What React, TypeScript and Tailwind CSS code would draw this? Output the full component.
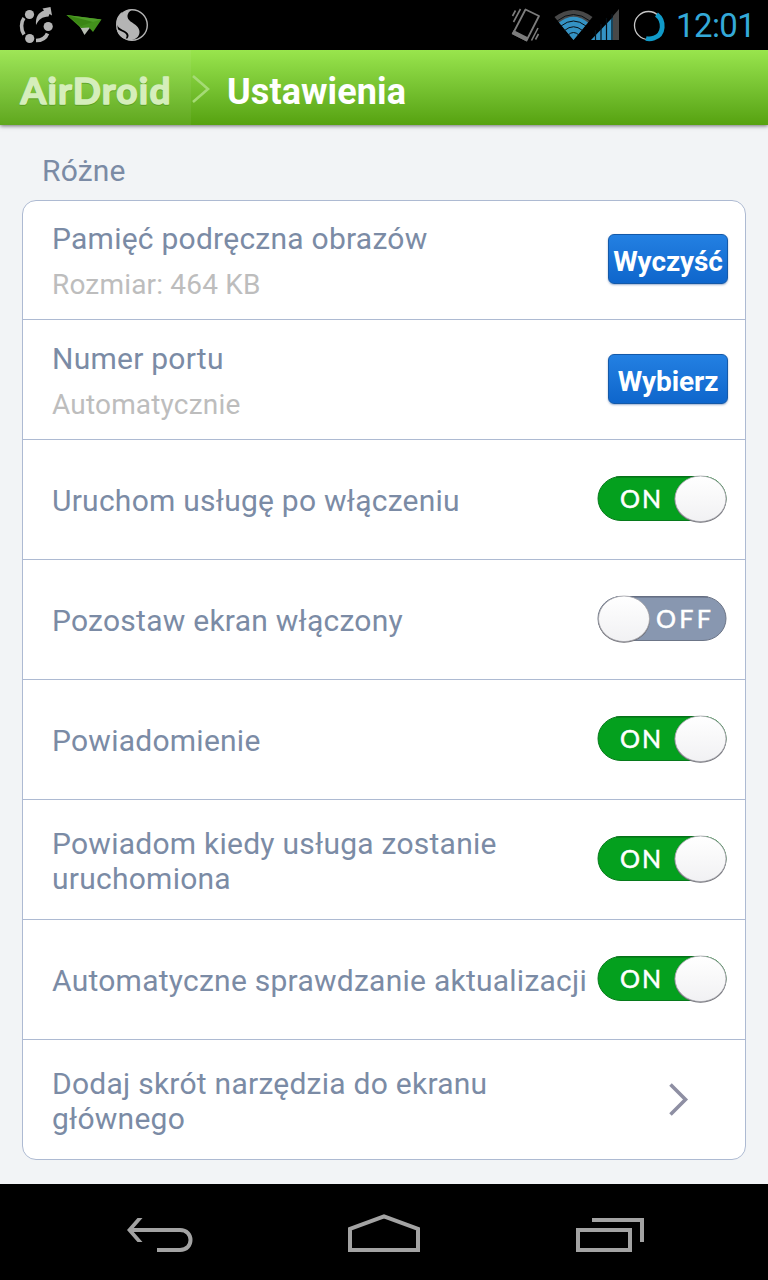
import { useState } from "react"
import type { ReactNode } from "react"

interface ToggleProps {
  on: boolean;
  label: string;
  onChange: () => void;
}

function Toggle({ on, label, onChange }: ToggleProps) {
  return (
    <button role="switch" aria-checked={on} aria-label={label} onClick={onChange} className="mb-[2px] h-[50px] w-[132px] shrink-0">
      <svg width="132" height="50" viewBox="0 0 132 50">
        <defs>
          <linearGradient id="knob" x1="0" y1="0" x2="0" y2="1">
            <stop offset="0" stopColor="#ffffff" />
            <stop offset="1" stopColor="#f1f1f3" />
          </linearGradient>
        </defs>
        <rect x="2" y="2.5" width="128" height="44" rx="23" ry="22" fill={on ? "#04a01e" : "#8897b0"} stroke={on ? "#067a1b" : "#6c7587"} />
        <path d="M20 3H112" stroke={on ? "#056a17" : "#5f697c"} />
        <text
          x={on ? 24 : 60}
          y={on ? 34 : 33.5}
          textLength={on ? 41 : 55}
          fontFamily="Lato, sans-serif"
          fontSize="25"
          fontWeight="400"
          fill="#fff"
          stroke="#fff"
          strokeWidth="0.5"
        >
          {on ? "ON" : "OFF"}
        </text>
        <ellipse cx={on ? 104.5 : 28} cy="25.5" rx="26" ry="23.2" fill="#6f6f76" />
        <ellipse cx={on ? 104.5 : 28} cy="24.8" rx="25.5" ry="22.8" fill="url(#knob)" stroke="#a6a6ac" strokeWidth="0.8" />
      </svg>
    </button>
  )
}

function BlueButton({ children }: { children: ReactNode }) {
  return (
    <button className="mb-[2px] h-[50px] w-[120px] shrink-0 rounded-md border border-[#1459a8] bg-linear-to-b from-[#2380e2] to-[#0e66cc] pt-[5px] text-[28px] leading-[43px] font-bold tracking-[-0.1px] whitespace-nowrap text-white shadow-[0_1px_2px_rgba(60,100,160,0.5)]">
      {children}
    </button>
  )
}

interface RowProps {
  title: string;
  subtitle?: string;
  children: ReactNode;
}

function Row({ title, subtitle, children }: RowProps) {
  return (
    <li className="flex min-h-0 items-center border-b border-[#adbad2] pr-[17px] pl-[29px] last:border-b-0">
      <div className="min-w-0 flex-1 pt-[2px]">
        <p className="text-[30px] leading-[35px] tracking-[0.25px] text-[#7b8ba5]">{title}</p>
        {subtitle && <p className="mt-[12px] text-[28px] leading-[33px] tracking-[0.18px] text-[#bdbdbd]">{subtitle}</p>}
      </div>
      {children}
    </li>
  )
}

function StatusBar() {
  return (
    <div className="flex h-[50px] items-center bg-black">
      <svg width="160" height="50" viewBox="0 0 160 50">
        {/* share */}
        <g fill="#b4b4b4">
          <circle cx="29.5" cy="14.5" r="4.6" />
          <circle cx="48.2" cy="26.5" r="4.6" />
          <circle cx="29.7" cy="38.5" r="4.6" />
          <path d="M36 25C35.500 17 38 13 44 10.500L42.500 8.500L50.500 7L52 15.500L49.500 14L48.500 16.500C42 17 39 19 36 25Z" />
        </g>
        <path d="M24 18C21 22 20.500 29 24 34.500M36 40.500C42 40.500 46 37.500 47.500 33.500" fill="none" stroke="#b4b4b4" strokeWidth="3.600" />
        {/* paper plane */}
        <path d="M79 25L92 25L84.500 35Z" fill="#b9bfb4" />
        <path d="M66.500 15L101.500 19.500L93 32L89 27.500L81 28Z" fill="#43911c" />
        <path d="M66.500 15L101.500 19.500L82 25Z" fill="#4f9e28" />
        <path d="M66.500 15L93 22L81 26Z" fill="#3b8514" />
        {/* swirl */}
        <circle cx="132" cy="25" r="15.300" fill="none" stroke="#b4b4b4" strokeWidth="1.400" />
        <path d="M132 9.500C128 10 124.500 11 122 14L121.500 12C119 15 116 18 116.500 23C117 27 121 29 124 30.500C129 33 130 36 126.500 39.500C133 41.500 139.500 38 139.500 32C139.500 27 135 24.500 130.500 21.500C126 18 126.500 13 132 9.500Z" fill="#b4b4b4" />
        <path d="M116.500 28C118 31 125 31.500 126.500 35C127 37 126 38 125 39C120 37 117 33 116.500 28Z" fill="#b4b4b4" />
      </svg>
      <div className="flex-1" />
      <svg width="160" height="50" viewBox="508 0 160 50">
        {/* vibrate */}
        <g fill="none" stroke="#7c7c7c">
          <path d="M525.500 9.500L539 16L526.500 40.500L513 33.500Z" strokeWidth="1.800" strokeLinejoin="round" />
          <path d="M514 31.500L527 38L526 40L513 33.500Z" fill="#7c7c7c" strokeWidth="2" />
          <path d="M520.500 9L513.500 22M515.500 10.500L512.500 16M538 28L531.500 40.500M538.500 34L535.500 39.500" strokeWidth="1.600" />
        </g>
        {/* wifi */}
        <path d="M573.500 40L554.500 17Q573.500 3 592.500 17Z" fill="#484848" />
        <path d="M573.500 40L559 22.500Q573.500 11 588 22.500Z" fill="#3493c4" />
        <g fill="none" stroke="#081014" strokeWidth="1">
          <path d="M557 21Q573.500 8 590 21" />
          <path d="M561 26Q573.500 16 586 26" />
          <path d="M564.500 30.500Q573.500 23 582.500 30.500" />
          <path d="M568 35Q573.500 30 579 35" />
        </g>
        {/* signal */}
        <path d="M591 40L613 17V40Z" fill="#3493c4" />
        <path d="M613 16L619 9V40H613Z" fill="#484848" />
        <path d="M595.500 30V40M601 24V40M606.500 18V40M612 14V40" stroke="#061016" strokeWidth="1.200" />
        {/* battery ring */}
        <circle cx="648.500" cy="25.500" r="14" fill="none" stroke="#c8c8c8" strokeWidth="1.300" />
        <path d="M656.500 14.500C665 21 664 35 654 38Q650 39.500 646 38.500" fill="none" stroke="#109ac8" strokeWidth="4.800" />
      </svg>
      <span className="w-[100px] pt-[2px] pl-[8px] text-[33px] leading-[50px] tracking-[-0.6px] text-[#34a9d8]">12:01</span>
    </div>
  )
}

function Header() {
  return (
    <header className="z-10 flex h-[75px] items-center bg-linear-to-b from-[#99e54d] to-[#56a20e] shadow-[0_1px_4px_rgba(0,0,0,0.55)]">
      <div className="h-full w-[191px] bg-white/[0.06]">
        <svg width="191" height="75" viewBox="0 0 191 75">
          <g fontFamily="Lato, sans-serif" fontSize="37" fontWeight="700" strokeWidth="1.600" strokeLinejoin="round">
            <text x="20.500" y="54.500" textLength="150" fill="#438315" stroke="#438315" opacity="0.500">AirDroid</text>
            <text x="20.500" y="53.500" textLength="150" fill="#d5eebb" stroke="#d5eebb">AirDroid</text>
          </g>
        </svg>
      </div>
      <svg className="mt-[3px]" width="20" height="30" viewBox="0 0 20 30">
        <path d="M2 2L17 15L2 28" fill="none" stroke="#a5db75" strokeWidth="2.600" />
      </svg>
      <h1 className="pt-[8px] pl-[16px] text-[36px] leading-[42px] font-bold tracking-[0.1px] text-white">Ustawienia</h1>
    </header>
  )
}

function NavBar() {
  return (
    <nav className="flex h-24 bg-black">
      <svg width="768" height="96" viewBox="0 1184 768 96" fill="none" stroke="#a3a3a3" strokeWidth="4">
        <path d="M131 1230H180C194 1230 194 1250 180 1250H157" />
        <path d="M137.500 1218H142.500L132 1230L142.500 1242H137.500L127 1230Z" fill="#a3a3a3" stroke="none" />
        <path d="M350 1250V1229L384 1216.300L418 1229V1250Z" />
        <path d="M578 1230H630V1250H578ZM592 1220H642V1242" />
      </svg>
    </nav>
  )
}

export default function App() {
  const [toggles, setToggles] = useState([
    { title: "Uruchom usługę po włączeniu", on: true },
    { title: "Pozostaw ekran włączony", on: false },
    { title: "Powiadomienie", on: true },
    { title: "Powiadom kiedy usługa zostanie uruchomiona", on: true },
    { title: "Automatyczne sprawdzanie aktualizacji", on: true },
  ])

  const flip = (index: number) =>
    setToggles((prev) => prev.map((t, i) => (i === index ? { ...t, on: !t.on } : t)))

  return (
    <div className="flex h-[1280px] w-[768px] flex-col overflow-hidden bg-[#f2f4f6] font-[Roboto,sans-serif]">
      <StatusBar />
      <Header />
      <main className="flex-1 px-[22px] pt-[28px]">
        <h2 className="h-[47px] pl-5 text-[30px] leading-[35px] tracking-[0.2px] text-[#7b8ba5]">Różne</h2>
        <ul className="grid h-[960px] grid-cols-1 grid-rows-[119px_repeat(6,120px)_119px] overflow-hidden rounded-[14px] border border-[#adbad2] bg-white">
          <Row title="Pamięć podręczna obrazów" subtitle="Rozmiar: 464 KB">
            <BlueButton>Wyczyść</BlueButton>
          </Row>
          <Row title="Numer portu" subtitle="Automatycznie">
            <BlueButton>Wybierz</BlueButton>
          </Row>
          {toggles.map((t, i) => (
            <Row key={t.title} title={t.title}>
              <Toggle on={t.on} label={t.title} onChange={() => flip(i)} />
            </Row>
          ))}
          <Row title="Dodaj skrót narzędzia do ekranu głównego">
            <svg className="mr-[37px] ml-[56px]" width="24" height="36" viewBox="0 0 24 36">
              <path d="M3.500 2.500L18.500 17.500L3.500 32.500" fill="none" stroke="#8e8fa3" strokeWidth="3.600" />
            </svg>
          </Row>
        </ul>
      </main>
      <NavBar />
    </div>
  )
}
